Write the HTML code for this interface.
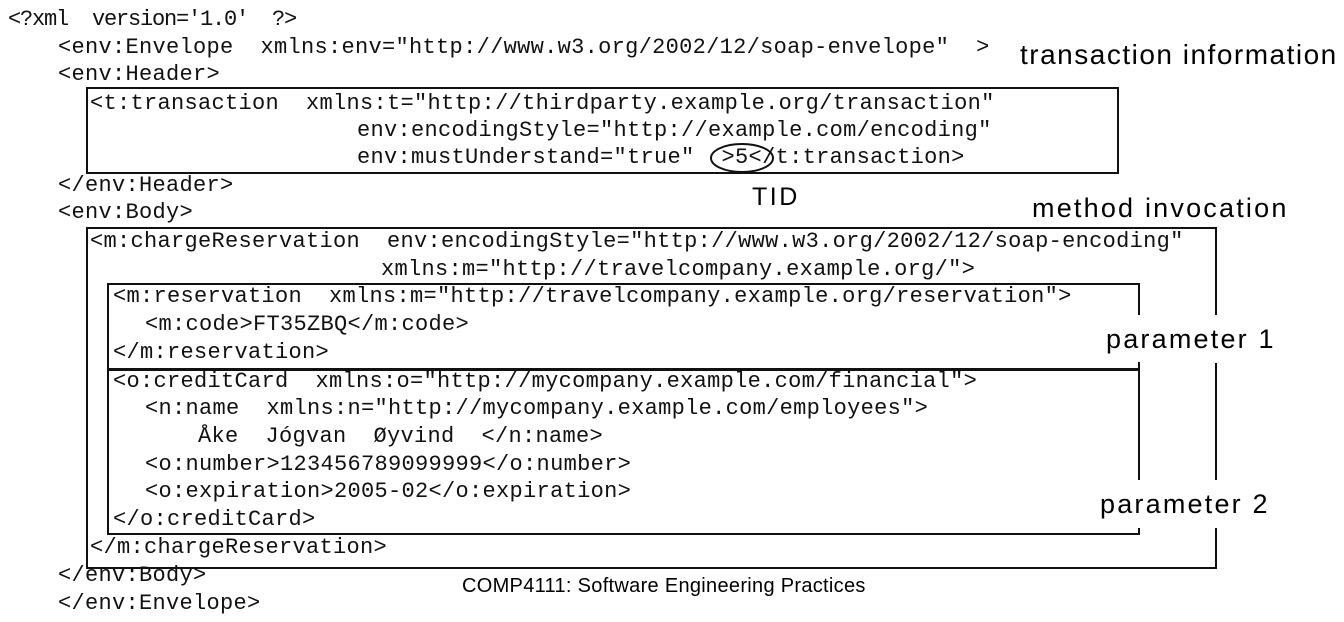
<!DOCTYPE html>
<html><head><meta charset="utf-8"><style>
html,body{margin:0;padding:0;background:#fff;}
body{width:1344px;height:622px;position:relative;overflow:hidden;}
.c{position:absolute;font-family:"Liberation Mono",monospace;font-size:22px;line-height:26px;white-space:pre;color:#111;letter-spacing:0.3px;}
.s{position:absolute;font-family:"Liberation Sans",sans-serif;color:#000;white-space:pre;}
.l{position:absolute;background:#111;}
</style></head><body>
<div class="c" style="left:8px;top:7px;letter-spacing:-1.2px">&lt;?xml  version='1.0'  ?&gt;</div>
<div class="c" style="left:58px;top:35px">&lt;env:Envelope  xmlns:env="http://www.w3.org/2002/12/soap-envelope"  &gt;</div>
<div class="c" style="left:58px;top:62px">&lt;env:Header&gt;</div>
<div class="c" style="left:90px;top:91px">&lt;t:transaction  xmlns:t="http://thirdparty.example.org/transaction"</div>
<div class="c" style="left:357px;top:118px">env:encodingStyle="http://example.com/encoding"</div>
<div class="c" style="left:357px;top:145px">env:mustUnderstand="true"  &gt;5&lt;/t:transaction&gt;</div>
<div class="c" style="left:58px;top:173px">&lt;/env:Header&gt;</div>
<div class="c" style="left:58px;top:200px">&lt;env:Body&gt;</div>
<div class="c" style="left:90px;top:229px">&lt;m:chargeReservation  env:encodingStyle="http://www.w3.org/2002/12/soap-encoding"</div>
<div class="c" style="left:381px;top:257px">xmlns:m="http://travelcompany.example.org/"&gt;</div>
<div class="c" style="left:113px;top:284px">&lt;m:reservation  xmlns:m="http://travelcompany.example.org/reservation"&gt;</div>
<div class="c" style="left:145px;top:312px">&lt;m:code&gt;FT35ZBQ&lt;/m:code&gt;</div>
<div class="c" style="left:113px;top:340px">&lt;/m:reservation&gt;</div>
<div class="c" style="left:113px;top:369px">&lt;o:creditCard  xmlns:o="http://mycompany.example.com/financial"&gt;</div>
<div class="c" style="left:145px;top:396px">&lt;n:name  xmlns:n="http://mycompany.example.com/employees"&gt;</div>
<div class="c" style="left:198px;top:424px">Åke  Jógvan  Øyvind  &lt;/n:name&gt;</div>
<div class="c" style="left:145px;top:452px">&lt;o:number&gt;123456789099999&lt;/o:number&gt;</div>
<div class="c" style="left:145px;top:479px">&lt;o:expiration&gt;2005-02&lt;/o:expiration&gt;</div>
<div class="c" style="left:113px;top:507px">&lt;/o:creditCard&gt;</div>
<div class="c" style="left:90px;top:535px">&lt;/m:chargeReservation&gt;</div>
<div class="c" style="left:58px;top:563px">&lt;/env:Body&gt;</div>
<div class="c" style="left:58px;top:591px">&lt;/env:Envelope&gt;</div>

<div style="position:absolute;left:86px;top:87px;width:1029px;height:83px;border:2px solid #111;"></div>
<svg style="position:absolute;left:0;top:0" width="1344" height="622">
<ellipse cx="742" cy="158" rx="31" ry="14" fill="none" stroke="#111" stroke-width="2"/>
</svg>

<div class="l" style="left:86px;top:227px;width:1131px;height:2px"></div>
<div class="l" style="left:86px;top:227px;width:2px;height:342px"></div>
<div class="l" style="left:86px;top:567px;width:1131px;height:2px"></div>
<div class="l" style="left:1215px;top:227px;width:2px;height:88px"></div>
<div class="l" style="left:1215px;top:363px;width:2px;height:117px"></div>
<div class="l" style="left:1215px;top:528px;width:2px;height:41px"></div>

<div class="l" style="left:107px;top:283px;width:1033px;height:2px"></div>
<div class="l" style="left:107px;top:283px;width:2px;height:252px"></div>
<div class="l" style="left:107px;top:368px;width:1033px;height:3px"></div>
<div class="l" style="left:107px;top:533px;width:1033px;height:2px"></div>
<div class="l" style="left:1138px;top:283px;width:2px;height:32px"></div>
<div class="l" style="left:1138px;top:362px;width:2px;height:118px"></div>
<div class="l" style="left:1138px;top:528px;width:2px;height:7px"></div>

<div class="s" style="left:1020px;top:39px;font-size:28px;letter-spacing:1.5px">transaction information</div>
<div class="s" style="left:752px;top:183px;font-size:25px;letter-spacing:2.5px">TID</div>
<div class="s" style="left:1032px;top:193px;font-size:27px;letter-spacing:2.2px">method invocation</div>
<div class="s" style="left:1106px;top:324px;font-size:27px;letter-spacing:2.2px">parameter 1</div>
<div class="s" style="left:1100px;top:489px;font-size:27px;letter-spacing:2.2px">parameter 2</div>
<div class="s" style="left:462px;top:575px;font-size:20px;letter-spacing:0.3px">COMP4111: Software Engineering Practices</div>
</body></html>
